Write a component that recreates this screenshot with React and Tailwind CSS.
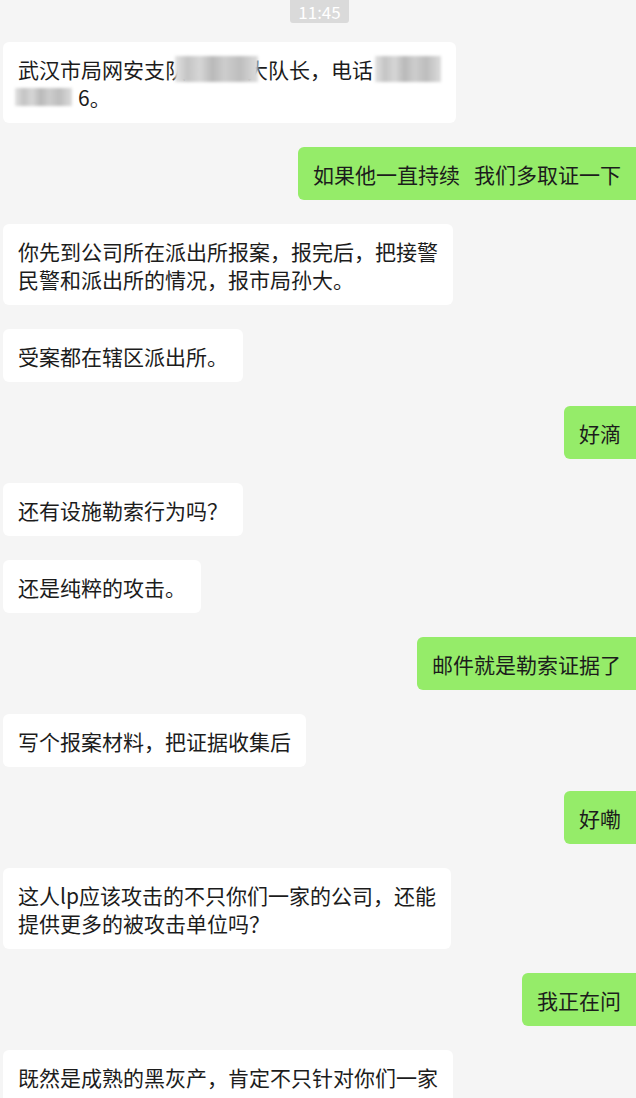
import React from "react";

const font = { fontFamily: '"Noto Sans CJK SC", "Noto Sans", sans-serif' };

function Left({ children }) {
  return (
    <div className="flex justify-start pl-[3px]">
      <div className="bg-white rounded-[6px] px-[15px] py-[12.5px] text-[21px] leading-[28px] text-[#1c1c1c] whitespace-nowrap">
        {children}
      </div>
    </div>
  );
}

function Right({ children }) {
  return (
    <div className="flex justify-end">
      <div className="bg-[#95ec69] rounded-l-[6px] px-[15px] py-[12.5px] text-[21px] leading-[28px] text-[#1c1c1c] whitespace-nowrap">
        {children}
      </div>
    </div>
  );
}

function Blur({ className }) {
  return (
    <span
      className={
        "relative z-10 inline-block align-middle blur-[1.5px] bg-[linear-gradient(90deg,#e2e2e2_0%,#c4c4c4_15%,#d6d6d6_30%,#b9b9b9_45%,#cdcdcd_60%,#bdbdbd_78%,#dcdcdc_100%)] " +
        className
      }
    />
  );
}

export default function App() {
  return (
    <div className="w-[636px] h-[1098px] overflow-hidden bg-[#f5f5f5]" style={font}>
      <div className="flex justify-center">
        <div className="h-[23px] px-[8px] pt-[1px] bg-[#dadada] rounded-b-[3px] text-white text-[17px] leading-[21px] ml-[3px]">
          11:45
        </div>
      </div>
      <div className="flex flex-col gap-[24px] pt-[19px]">
        <Left>
          <div className="h-[28px] flex items-center">
            武汉市局网安支队
            <Blur className="w-[83px] h-[26px] ml-[-11px] mr-[-11px]" />
            大队长，电话
            <Blur className="w-[66px] h-[26px] ml-[2px]" />
          </div>
          <div className="h-[28px] flex items-center">
            <Blur className="w-[57px] h-[18px] ml-[-3px] mr-[6px]" />
            6。
          </div>
        </Left>
        <Right>
          如果他一直持续<span className="inline-block w-[14px]" />我们多取证一下
        </Right>
        <Left>
          <div>你先到公司所在派出所报案，报完后，把接警</div>
          <div>民警和派出所的情况，报市局孙大。</div>
        </Left>
        <Left>受案都在辖区派出所。</Left>
        <Right>好滴</Right>
        <Left>还有设施勒索行为吗？</Left>
        <Left>还是纯粹的攻击。</Left>
        <Right>邮件就是勒索证据了</Right>
        <Left>写个报案材料，把证据收集后</Left>
        <Right>好嘞</Right>
        <Left>
          <div>这人lp应该攻击的不只你们一家的公司，还能</div>
          <div>提供更多的被攻击单位吗？</div>
        </Left>
        <Right>我正在问</Right>
        <Left>既然是成熟的黑灰产，肯定不只针对你们一家</Left>
      </div>
    </div>
  );
}
